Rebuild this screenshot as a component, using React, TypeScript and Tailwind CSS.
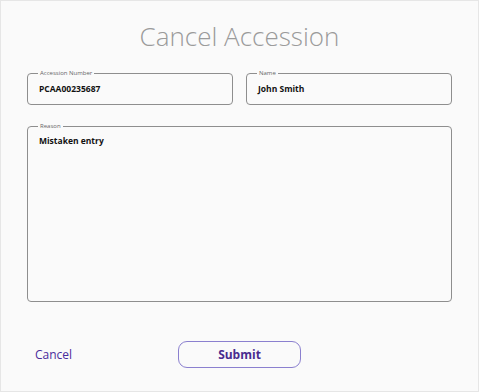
export default function App() {
  return (
    <div
      className="w-[479px] h-[392px] bg-[#fafafa] border border-[#e6e6e6] overflow-hidden"
      style={{ fontFamily: '"Open Sans", "Noto Sans", sans-serif' }}
    >
      <h1 className="pt-[17px] text-center text-[26px] leading-[36px] font-light text-[#9b9b9b]">
        Cancel Accession
      </h1>

      <div className="mt-[15px] px-[26px] grid grid-cols-2 gap-[13px]">
        <fieldset className="border border-[#8e8e8e] rounded-[4px] pl-[10px] pr-[8px] pb-[9px]">
          <legend className="px-[2px] text-[6px] leading-[8px] text-[#666]">
            Accession Number
          </legend>
          <div className="pt-[6px] pl-[1px] text-[8.5px] leading-[12px] font-bold text-[#111]">
            PCAA00235687
          </div>
        </fieldset>
        <fieldset className="border border-[#8e8e8e] rounded-[4px] pl-[10px] pr-[8px] pb-[9px]">
          <legend className="px-[2px] text-[6px] leading-[8px] text-[#666]">
            Name
          </legend>
          <div className="pt-[6px] pl-[1px] text-[8.5px] leading-[12px] font-bold text-[#111]">
            John Smith
          </div>
        </fieldset>
      </div>

      <div className="mt-[17px] px-[26px]">
        <fieldset className="border border-[#8e8e8e] rounded-[4px] pl-[10px] pr-[8px]">
          <legend className="px-[2px] text-[6px] leading-[8px] text-[#666]">
            Reason
          </legend>
          <div className="h-[171px] pt-[5px] pl-[1px] text-[8.5px] leading-[12px] font-bold text-[#111]">
            Mistaken entry
          </div>
        </fieldset>
      </div>

      <div className="mt-[39px] px-[26px] grid grid-cols-[1fr_123px_1fr] items-center">
        <button className="justify-self-start ml-[8px] text-[12px] leading-[16px] text-[#4a2c9c]">
          Cancel
        </button>
        <button className="h-[27px] rounded-[9px] border border-[#8b80cf] text-[12px] font-bold text-[#4a2c8f]">
          Submit
        </button>
        <div />
      </div>
    </div>
  );
}
